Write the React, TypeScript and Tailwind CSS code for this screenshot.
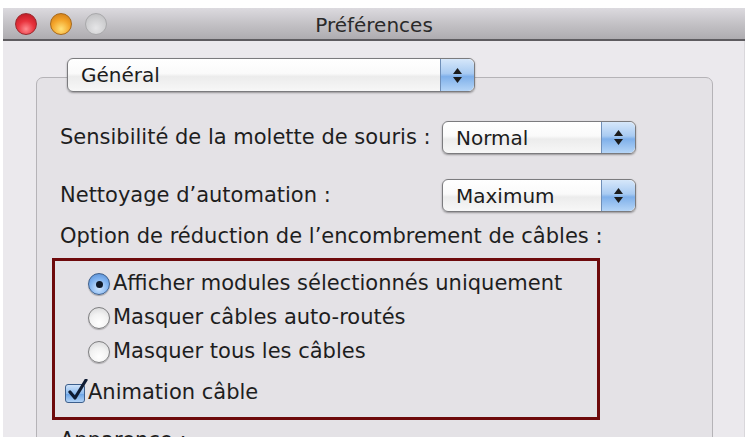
const font = { fontFamily: '"DejaVu Sans", "Liberation Sans", sans-serif' };

const Stepper = () => (
  <div className="flex h-full w-[34px] flex-col items-center justify-center gap-[3px] rounded-r-[6px] border-l border-[#6f8fb8] bg-[linear-gradient(to_bottom,#d6e7fa_0%,#a9cbf2_45%,#7fb0ea_55%,#b5d5f7_100%)]">
    <svg width="9" height="6" viewBox="0 0 9 6">
      <path d="M4.5 0 L9 6 L0 6 Z" fill="#1b1b1b" />
    </svg>
    <svg width="9" height="6" viewBox="0 0 9 6">
      <path d="M0 0 L9 0 L4.5 6 Z" fill="#1b1b1b" />
    </svg>
  </div>
);

const Popup = ({ label, className }: { label: string; className: string }) => (
  <div
    className={`flex items-stretch rounded-[6px] border border-[#7b7b7e] bg-[linear-gradient(to_bottom,#ffffff_0%,#fafafa_45%,#ececec_55%,#f7f7f7_100%)] shadow-[0_1px_2px_rgba(0,0,0,0.35)] ${className}`}
  >
    <div className="flex flex-1 items-center pl-[13px] text-[20px] text-[#1c1c1c]">{label}</div>
    <Stepper />
  </div>
);

const Radio = ({ checked }: { checked?: boolean }) =>
  checked ? (
    <div className="flex h-[22px] w-[22px] shrink-0 items-center justify-center rounded-full border border-[#3d5f8c] bg-[radial-gradient(circle_at_50%_70%,#cfe6ff_0%,#7fb2ef_55%,#4f86cf_100%)] shadow-[0_1px_1px_rgba(0,0,0,0.3)]">
      <div className="h-[7px] w-[7px] rounded-full bg-[#101a2a]" />
    </div>
  ) : (
    <div className="h-[22px] w-[22px] shrink-0 rounded-full border border-[#7e7e80] bg-[radial-gradient(circle_at_50%_75%,#ffffff_0%,#f2f2f2_50%,#d2d2d4_100%)] shadow-[0_1px_1px_rgba(0,0,0,0.25)]" />
  );

const Check = () => (
  <div className="relative h-[19px] w-[20px] shrink-0 rounded-[3px] border border-[#3d5f8c] bg-[linear-gradient(to_bottom,#cfe3fa_0%,#8dbbee_50%,#6da5e6_55%,#b3d3f6_100%)]">
    <svg className="absolute -top-[6px] left-[1px]" width="22" height="24" viewBox="0 0 22 24">
      <path d="M3 13 L8 19 L19 1" fill="none" stroke="#0f1c33" strokeWidth="3.2" strokeLinecap="round" strokeLinejoin="round" />
    </svg>
  </div>
);

const Light = ({ bg }: { bg: string }) => <div className={`h-[22px] w-[22px] rounded-full ${bg}`} />;

export default function App() {
  return (
    <div className="flex h-[437px] w-[748px] flex-col overflow-hidden bg-white text-[#1e1e1e]" style={font}>
      <div className="h-[8px] shrink-0" />
      <div className="ml-[3px] flex w-[742px] flex-1 flex-col">
        {/* title bar */}
        <div className="relative flex h-[33px] shrink-0 items-center gap-[13px] border-b-2 border-[#5e5c60] bg-[linear-gradient(to_bottom,#dcdadf_0%,#c4c2c6_50%,#aeacb0_100%)] pl-[12px]">
          <Light bg="border border-[#9a2a2e] bg-[radial-gradient(circle_at_50%_75%,#ff8a8f_0%,#e8333d_45%,#b3161f_100%)]" />
          <Light bg="border border-[#a8691a] bg-[radial-gradient(circle_at_50%_75%,#ffe27a_0%,#f4a52a_50%,#c87413_100%)]" />
          <Light bg="border border-[#a9a9ab] bg-[radial-gradient(circle_at_50%_70%,#e6e6e8_0%,#cdcdcf_60%,#b9b9bb_100%)]" />
          <div className="absolute inset-0 flex items-center justify-center pt-[2px] text-[20px] text-[#2a2a2a]">
            Préférences
          </div>
        </div>

        {/* content */}
        <div className="flex-1 border-r border-[#d9d7db] bg-[#ebe9ed] pt-[17px]">
          <Popup label="Général" className="relative z-10 ml-[64px] h-[34px] w-[408px]" />

          <div className="-mt-[15px] ml-[33px] h-[420px] w-[677px] rounded-[7px] border border-[#b5b3b7] bg-[#e4e2e6] pt-[43px] text-[21px]">
            <div className="flex h-[33px] items-center">
              <div className="w-[405px] pl-[23px]">Sensibilité de la molette de souris :</div>
              <Popup label="Normal" className="h-[33px] w-[194px]" />
            </div>
            <div className="mt-[25px] flex h-[33px] items-center">
              <div className="w-[405px] pl-[23px]">Nettoyage d’automation :</div>
              <Popup label="Maximum" className="h-[33px] w-[194px]" />
            </div>
            <div className="mt-[12px] h-[24px] whitespace-nowrap pl-[23px] leading-[24px]">
              Option de réduction de l’encombrement de câbles :
            </div>

            <div className="ml-[15px] mt-[10px] w-[548px] border-[3px] border-[#6e0a0c] pb-[7px] pt-[6px]">
              <div className="flex h-[34px] items-center gap-[3px] pl-[33px]">
                <Radio checked />
                <span>Afficher modules sélectionnés uniquement</span>
              </div>
              <div className="flex h-[34px] items-center gap-[3px] pl-[33px]">
                <Radio />
                <span>Masquer câbles auto-routés</span>
              </div>
              <div className="flex h-[34px] items-center gap-[3px] pl-[33px]">
                <Radio />
                <span>Masquer tous les câbles</span>
              </div>
              <div className="mt-[7px] flex h-[34px] items-center gap-[3px] pl-[10px]">
                <Check />
                <span>Animation câble</span>
              </div>
            </div>

            <div className="mt-[8px] h-[24px] pl-[23px] leading-[24px]">Apparence :</div>
          </div>
        </div>
      </div>
    </div>
  );
}
